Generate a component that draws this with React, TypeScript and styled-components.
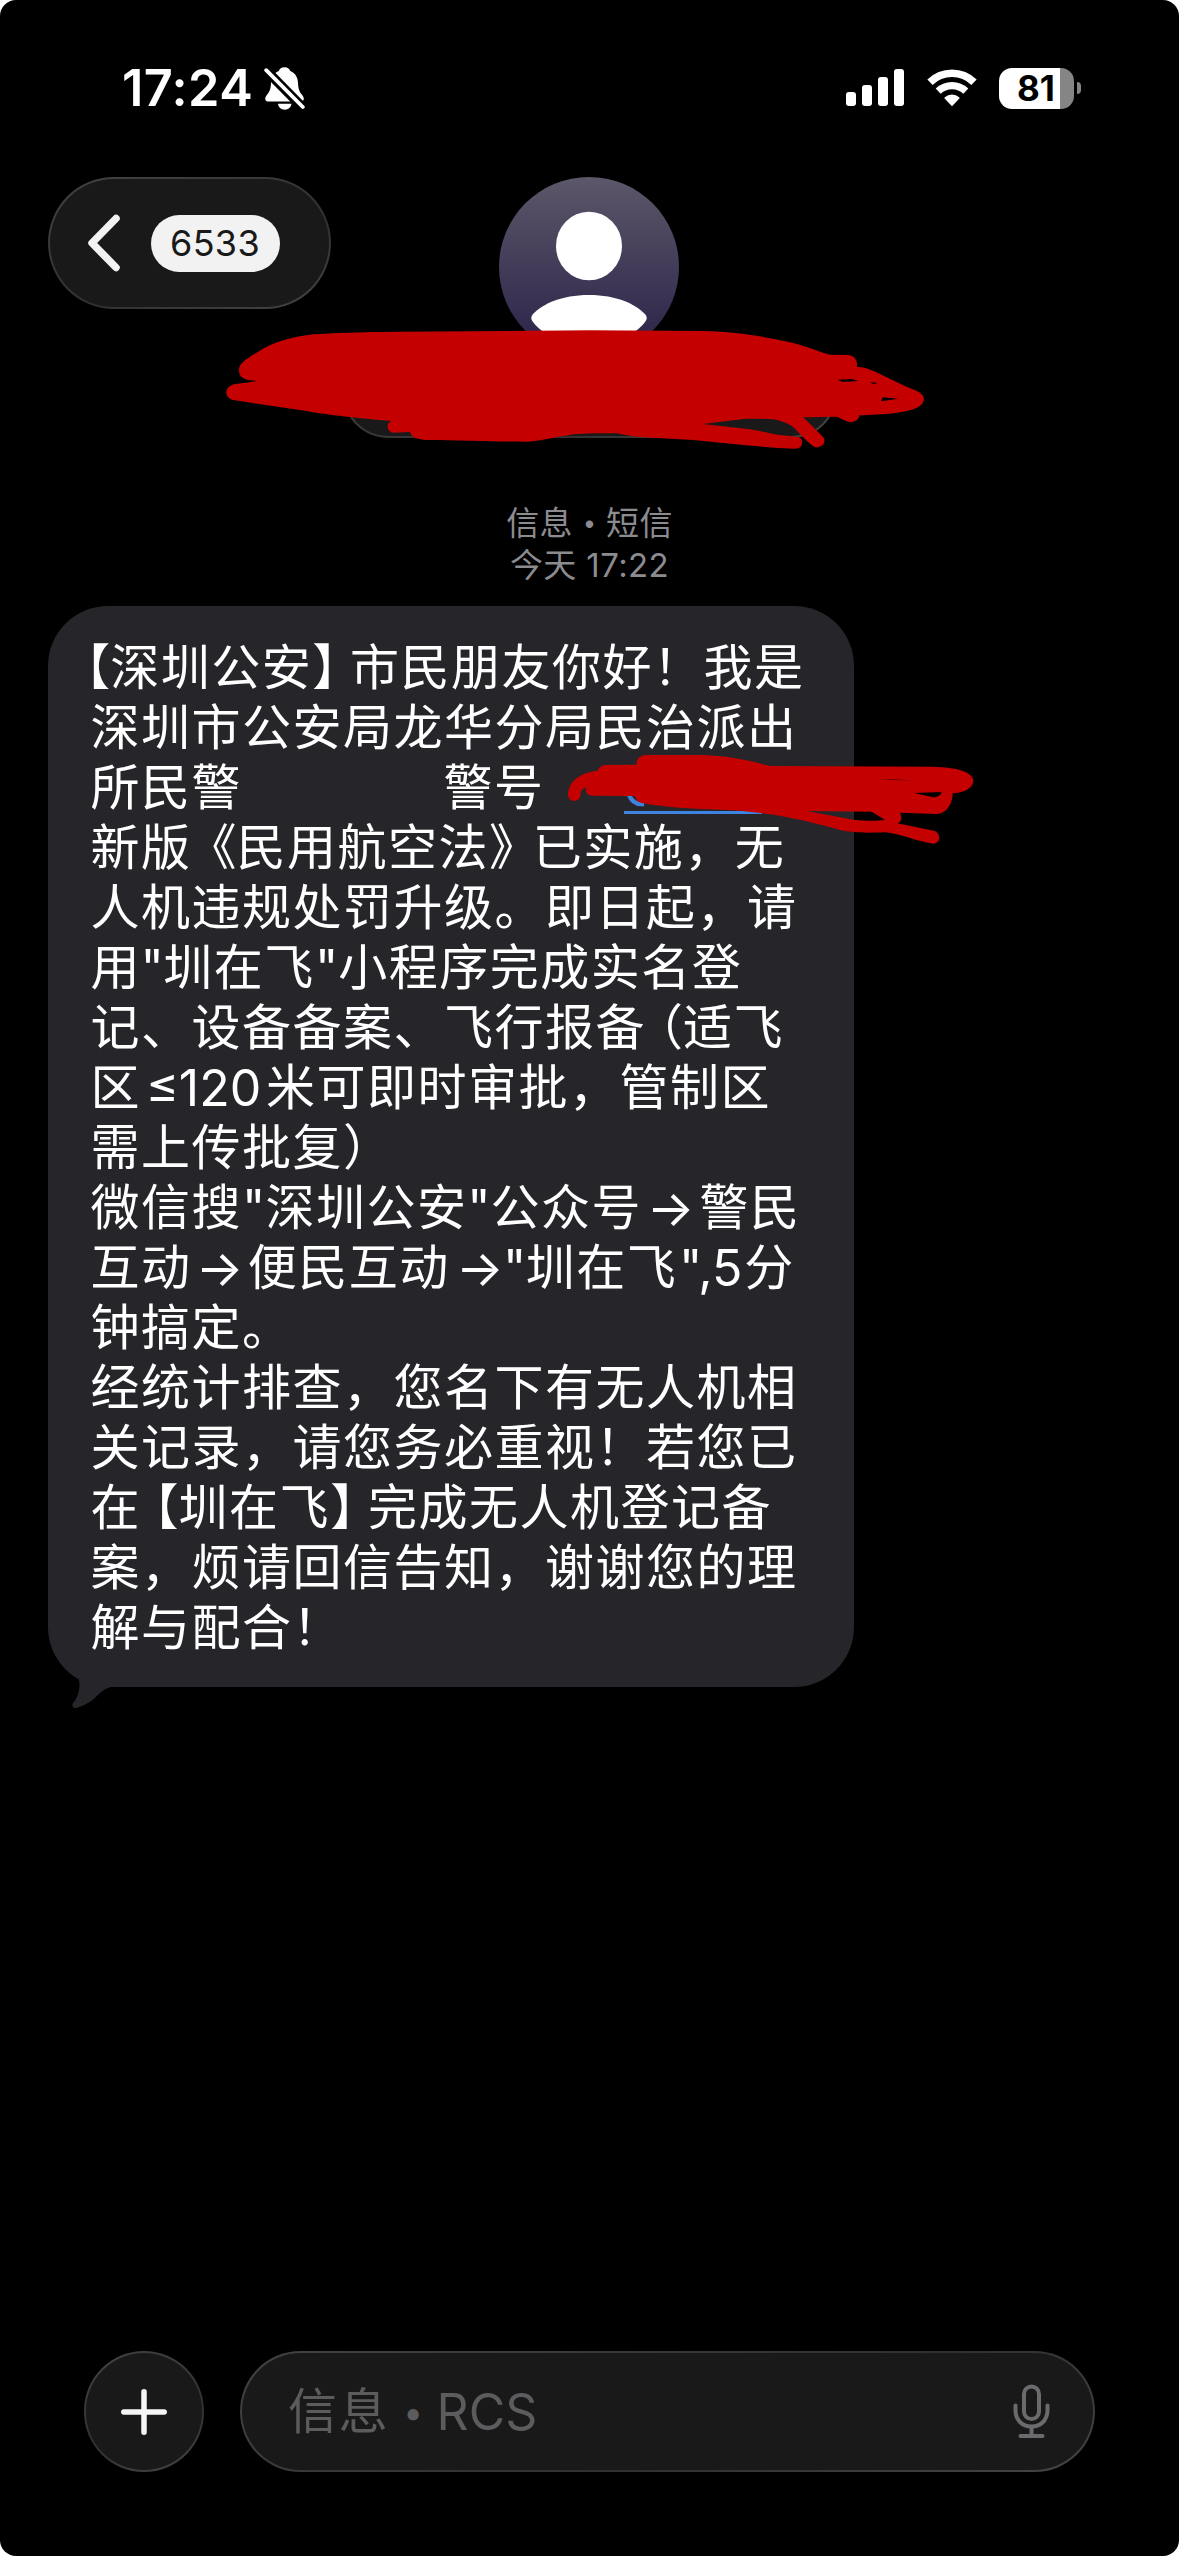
import React from "react";
import styled, { createGlobalStyle, css } from "styled-components";

const fontStack = `Inter, "Noto Sans CJK SC", sans-serif`;

const GlobalStyle = createGlobalStyle`
  html, body { margin: 0; padding: 0; background: #fff; }
  * { box-sizing: border-box; }
`;

const Screen = styled.main`
  width: 1179px;
  height: 2556px;
  background: #000;
  border-radius: 16px;
  overflow: hidden;
  display: flex;
  flex-direction: column;
  color: #fff;
  font-family: ${fontStack};
`;

const glass = css`
  border: 2px solid transparent;
  background:
    linear-gradient(#191919, #191919) padding-box,
    linear-gradient(160deg, #434343 0%, #363636 40%, #303030 60%, #454545 100%) border-box;
`;

/* ---------- status bar ---------- */

const StatusBar = styled.header`
  height: 177px;
  flex: none;
  display: flex;
  justify-content: space-between;
  align-items: flex-start;
  padding: 67px 98px 0 122px;
`;

const StatusGroup = styled.div<{ $gap: number }>`
  display: flex;
  align-items: center;
  gap: ${(p) => p.$gap}px;
  height: 42px;
`;

const Clock = styled.span`
  width: 132px;
  font-size: 50.5px;
  font-weight: 600;
  line-height: 42px;
  letter-spacing: 0.4px;
  white-space: nowrap;
`;

const Battery = styled.div`
  display: flex;
  align-items: center;
  gap: 3px;
`;

const BatteryBody = styled.div`
  width: 75px;
  height: 41px;
  border-radius: 13px;
  background: linear-gradient(90deg, #fff 0 61px, #858585 61px);
  color: #000;
  font-size: 35px;
  font-weight: 700;
  line-height: 41px;
  text-align: center;
  padding-right: 1px;
  letter-spacing: 0;
`;

const BatteryCap = styled.div`
  width: 4px;
  height: 12px;
  border-radius: 0 5px 5px 0;
  background: #858585;
`;

/* ---------- conversation header ---------- */

const ConversationHeader = styled.section`
  position: relative;
  flex: none;
  height: 261px;
  display: grid;
  grid-template-columns: 295px 494px;
  padding-left: 48px;
  align-items: start;
`;

const BackButton = styled.button`
  ${glass}
  width: 283px;
  height: 132px;
  border-radius: 66px;
  padding: 0 0 0 37px;
  display: flex;
  align-items: center;
  gap: 30px;
  font-family: inherit;
`;

const UnreadBadge = styled.span`
  width: 129px;
  height: 57px;
  border-radius: 28.5px;
  background: #f2f2f2;
  color: #191919;
  font-size: 36px;
  line-height: 57px;
  letter-spacing: 0.3px;
  padding-right: 1px;
  text-align: center;
`;

const Contact = styled.div`
  display: flex;
  flex-direction: column;
  align-items: center;
`;

const AvatarImage = styled.svg`
  margin-left: -2px;
`;

const NamePill = styled.div`
  ${glass}
  width: 494px;
  height: 90px;
  margin-top: -9px;
  border-radius: 45px;
`;

const HeaderScribble = styled.svg`
  position: absolute;
  left: 210px;
  top: 132.5px;
`;

/* ---------- conversation ---------- */

const Timestamp = styled.div`
  flex: none;
  margin-top: 63px;
  height: 84px;
  padding-top: 0.5px;
  text-align: center;
  font-size: 33px;
  line-height: 42px;
  color: #8c8c90;
  letter-spacing: 0.4px;
`;

const TimestampRow = styled.div`
  display: flex;
  justify-content: center;
  white-space: pre;
`;

const Dot = styled.span<{ $w: number }>`
  width: ${(p) => p.$w}px;
  display: inline-flex;
  justify-content: center;
  font-size: 0.72em;
  letter-spacing: 0;
`;

const Conversation = styled.section`
  flex: 1;
  padding: 21px 0 0 48px;
`;

const Bubble = styled.article`
  position: relative;
  width: 806px;
  height: 1081px;
  border-radius: 60px;
  background: #26252a;
  padding: 32px 0 0 42.5px;
  font-size: 49px;
  letter-spacing: 1.5px;
  line-height: 60px;
`;

const Line = styled.div`
  height: 60px;
  display: flex;
  white-space: pre;
`;

type Align = "flex-start" | "flex-end" | "center";

const Glyph = styled.span<{ $w: number; $align?: Align; $size?: number }>`
  width: ${(p) => p.$w}px;
  flex: none;
  display: inline-flex;
  justify-content: ${(p) => p.$align ?? "center"};
  letter-spacing: 0;
  font-size: ${(p) => p.$size ?? 49}px;
  font-feature-settings: "halt";
`;

const PhoneLink = styled.span`
  width: 138px;
  height: 3px;
  margin: 53px 0 0 79px;
  background: #3d84e0;
`;

const Tail = styled.svg`
  position: absolute;
  left: 20px;
  bottom: -23px;
`;

const BubbleScribble = styled.svg`
  position: absolute;
  left: 512px;
  top: 133.5px;
`;

/* ---------- composer ---------- */

const Composer = styled.footer`
  flex: none;
  height: 205px;
  display: flex;
  gap: 36px;
  padding: 0 84px;
`;

const AddButton = styled.button`
  ${glass}
  width: 120px;
  height: 121px;
  border-radius: 60.5px;
  padding: 0;
  display: flex;
  align-items: center;
  justify-content: center;
`;

const MessageField = styled.div`
  ${glass}
  flex: 1;
  height: 121px;
  border-radius: 60.5px;
  padding: 0 43px 0 46px;
  display: flex;
  align-items: center;
  justify-content: space-between;
  color: #5c5c5f;
  font-size: 50px;
  line-height: 60px;
  white-space: pre;
`;

const Placeholder = styled.span`
  display: flex;
  padding-top: 1px;
`;

const PlaceholderName = styled.span`
  font-size: 49px;
  letter-spacing: 1.8px;
`;

type Part = string | { g: string; w: number; align?: Align; size?: number };

const open = (g: string, w: number): Part => ({ g, w, align: "flex-end" });
const close = (g: string, w: number): Part => ({ g, w, align: "flex-start" });
const latin = (g: string, w: number, align?: Align): Part => ({ g, w, align, size: 50 });

const message: Part[][] = [
  [open("【", 19.7), "深圳公安", close("】", 37.7), "市民朋友你好！我是"],
  ["深圳市公安局龙华分局民治派出"],
  ["所民警", { g: "", w: 201.6 }, "警号"],
  ["新版", open("《", 44.9), "民用航空法", close("》", 43.9), "已实施，无"],
  ["人机违规处罚升级。即日起，请"],
  ["用", latin('"', 22.3), "圳在飞", latin('"', 23.4), "小程序完成实名登"],
  ["记、设备备案、飞行报备", open("（", 37), "适飞"],
  ["区", latin("≤120", 125), "米可即时审批，管制区"],
  ["需上传批复", close("）", 38)],
  ["微信搜", latin('"', 23.4), "深圳公安", latin('"', 23), "公众号", latin("→", 57.5), "警民"],
  ["互动", latin("→", 56.2), "便民互动", latin("→", 54, "flex-end"), latin('"', 22), "圳在飞", latin('",5', 67), "分"],
  ["钟搞定。"],
  ["经统计排查，您名下有无人机相"],
  ["关记录，请您务必重视！若您已"],
  ["在", open("【", 37.6), "圳在飞", close("】", 37.8), "完成无人机登记备"],
  ["案，烦请回信告知，谢谢您的理"],
  ["解与配合！"],
];

const SignalIcon = () => (
  <svg width="59" height="38" viewBox="0 0 59 38" fill="#fff">
    <rect x="0" y="23" width="10" height="14" rx="3" />
    <rect x="16" y="16" width="10" height="21" rx="3" />
    <rect x="32" y="8" width="10" height="29" rx="3" />
    <rect x="48" y="0" width="10" height="37" rx="3" />
  </svg>
);

const WifiIcon = () => (
  <svg width="50" height="38" viewBox="0 0 50 38" fill="none" stroke="#fff">
    <path d="M3 13.2A31.5 31.5 0 0 1 47 13.2" strokeWidth="7.6" />
    <path d="M11.2 22.2A20 20 0 0 1 38.8 22.2" strokeWidth="7.2" />
    <path d="M25 37.2 17.6 29.6Q17 28.8 17.8 28.2A11 11 0 0 1 32.2 28.2Q33 28.8 32.4 29.6Z" fill="#fff" stroke="none" />
  </svg>
);

const BellSlashIcon = () => (
  <svg width="42" height="46" viewBox="0 0 42 46">
    <path
      d="M20.500 2.200C17 2.200 15.300 4.300 14.700 6C9 8.500 7.200 13 7 18C6.800 24 5.500 27 3.200 29.500C1.500 31.500 1 33 1.300 34.500C1.700 36.100 2.900 36.500 4.500 36.500H36.500C38.100 36.500 39.300 36.100 39.700 34.500C40 33 39.500 31.500 37.800 29.500C35.500 27 34.200 24 34 18C33.800 13 32 8.500 26.300 6C25.700 4.300 24 2.200 20.500 2.200Z"
      fill="#fff"
    />
    <path d="M14 38.800H27.500C27 42.300 24.300 44.700 20.700 44.700S14.400 42.300 14 38.800Z" fill="#fff" />
    <path d="M2 5.200 39 42.700" stroke="#000" strokeWidth="9.500" />
    <path d="M2.200 5.200 38.800 42" stroke="#fff" strokeWidth="3.800" strokeLinecap="round" />
  </svg>
);

const BackIcon = () => (
  <svg width="34" height="58" viewBox="0 0 34 58" fill="none">
    <path d="M29 4.500 5 29 29 53.500" stroke="#f2f2f2" strokeWidth="7.500" strokeLinecap="round" strokeLinejoin="round" />
  </svg>
);

const Avatar = () => (
  <AvatarImage width="180" height="180" viewBox="0 0 180 180">
    <defs>
      <linearGradient id="avatar" x1="0" y1="0" x2="0" y2="1">
        <stop offset="0" stopColor="#5c5769" />
        <stop offset="1" stopColor="#2a2148" />
      </linearGradient>
    </defs>
    <circle cx="90" cy="90" r="90" fill="url(#avatar)" />
    <ellipse cx="90" cy="69" rx="33" ry="34.300" fill="#fff" />
    <path d="M90 118C62 118 44 127 34 137Q30.500 141 34 145C44 158 64 168 90 168S136 158 146 145Q149.500 141 146 137C136 127 118 118 90 118Z" fill="#fff" />
  </AvatarImage>
);

const MicIcon = () => (
  <svg width="37" height="55" viewBox="0 0 37 55" fill="none" stroke="#6b6b6e" strokeWidth="4" strokeLinecap="round">
    <rect x="11" y="2.500" width="15" height="32.500" rx="7.500" />
    <path d="M2.500 21.500V26C2.500 36 9 42.500 18.500 42.500S34.500 36 34.500 26V21.500" />
    <path d="M18.500 43V52M7.500 52H29.500" />
  </svg>
);

export default function App() {
  return (
    <>
      <GlobalStyle />
      <Screen>
        <StatusBar>
          <StatusGroup $gap={10}>
            <Clock>17:24</Clock>
            <BellSlashIcon />
          </StatusGroup>
          <StatusGroup $gap={22}>
            <SignalIcon />
            <WifiIcon />
            <Battery>
              <BatteryBody>81</BatteryBody>
              <BatteryCap />
            </Battery>
          </StatusGroup>
        </StatusBar>

        <ConversationHeader>
          <BackButton aria-label="返回">
            <BackIcon />
            <UnreadBadge>6533</UnreadBadge>
          </BackButton>
          <Contact>
            <Avatar />
            <NamePill />
          </Contact>
          <HeaderScribble width="730" height="150" viewBox="0 0 2190 450" fill="#c50000">
            <path
              fillRule="evenodd"
              d="M87 182C87 165 95 155 140 128C190 95 240 82 310 73C370 69 450 66 560 65L1140 61L1480 63C1580 66 1640 75 1740 97C1790 108 1830 128 1860 134L1915 135C1935 137 1943 152 1941 170C1975 172 1990 182 2100 235C2130 245 2142 255 2142 268C2140 290 2110 302 2060 308C2020 314 1980 314 1948 316C1948 328 1935 336 1925 336C1910 337 1895 325 1880 320L1780 322L1840 382C1850 400 1835 412 1820 412C1810 412 1800 400 1790 392C1770 375 1762 362 1750 352C1735 340 1710 332 1690 328C1660 326 1630 326 1600 327L1478 342L1620 358C1670 366 1700 378 1760 380Q1776 382 1776 395C1778 412 1765 416 1755 416C1650 412 1550 400 1450 390L1290 381C1250 378 1230 370 1215 370C1150 370 1110 370 1080 375C1040 380 1000 392 950 395C850 395 700 390 650 390C625 388 605 385 600 366L550 368C530 365 526 340 545 333C450 325 350 315 290 303L75 271C40 265 40 230 75 222C100 218 125 217 140 212C110 212 87 205 87 182ZM1882 209L1925 207L1945 213L1900 216ZM2018 262L2065 266L2014 274ZM1980 216L2004 219L1990 222Z"
            />
          </HeaderScribble>
        </ConversationHeader>

        <Timestamp>
          <TimestampRow>
            <span>信息</span>
            <Dot $w={33}>•</Dot>
            <span>短信</span>
          </TimestampRow>
          <TimestampRow>今天 17:22</TimestampRow>
        </Timestamp>

        <Conversation>
          <Bubble>
            {message.map((line, i) => (
              <Line key={i}>
                {line.map((part, j) =>
                  typeof part === "string" ? (
                    <span key={j}>{part}</span>
                  ) : (
                    <Glyph key={j} $w={part.w} $align={part.align} $size={part.size}>
                      {part.g}
                    </Glyph>
                  )
                )}
                {i === 2 && <PhoneLink />}
              </Line>
            ))}
            <Tail width="80" height="44" viewBox="0 0 80 44" fill="#26252a">
              <path d="M8 4C11 12 12 17 11.300 22C10.500 29 8 34 5 37C3.500 40 5 42.500 8 42C16 40 22 36 27 32C33 26 37 21.500 46 20.500L60 10Z" />
            </Tail>
            <BubbleScribble width="420" height="110" viewBox="0 0 1260 330" fill="#c50000">
              <path d="M206 162Q218 196 252 192" fill="none" stroke="#3d84e0" strokeWidth="13" />
              <path
                fillRule="evenodd"
                d="M230 72C230 50 245 45 265 45L430 45C510 48 570 62 630 78L1120 80C1190 82 1238 95 1240 122C1238 145 1215 157 1178 160C1178 190 1160 222 1130 222L1020 218C1027 235 1025 246 1012 250L1125 273C1145 285 1140 310 1120 311C1070 305 1020 280 975 277C900 280 860 277 820 264C750 246 680 228 600 219L540 212C430 208 330 205 250 190C235 188 228 180 225 168L95 167C75 165 72 145 84 141C68 145 62 150 62 162C62 188 25 190 24 165C25 130 50 100 112 92C120 78 130 75 140 75L230 74ZM740 213L935 215C950 225 965 232 975 240C940 244 915 242 885 240ZM1062 159L1145 156C1142 166 1135 171 1120 172ZM955 117L1065 121L1000 120Z"
              />
            </BubbleScribble>
          </Bubble>
        </Conversation>

        <Composer>
          <AddButton aria-label="添加">
            <svg width="46" height="46" viewBox="0 0 46 46" stroke="#f5f5f5" strokeWidth="5.500" strokeLinecap="round">
              <path d="M23 2.800V43.200M2.800 23H43.200" />
            </svg>
          </AddButton>
          <MessageField>
            <Placeholder>
              <PlaceholderName>信息</PlaceholderName>
              <Dot $w={47}>•</Dot>
              <span>RCS</span>
            </Placeholder>
            <MicIcon />
          </MessageField>
        </Composer>
      </Screen>
    </>
  );
}
